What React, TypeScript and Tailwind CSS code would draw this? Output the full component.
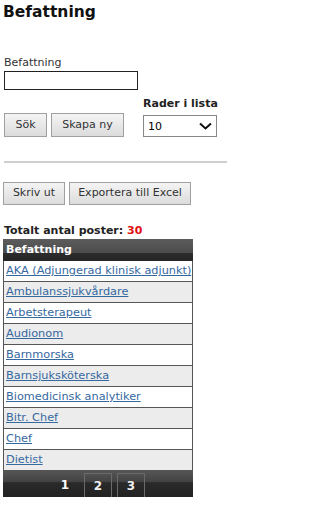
import React from "react";

const rows = [
  "AKA (Adjungerad klinisk adjunkt)",
  "Ambulanssjukvårdare",
  "Arbetsterapeut",
  "Audionom",
  "Barnmorska",
  "Barnsjuksköterska",
  "Biomedicinsk analytiker",
  "Bitr. Chef",
  "Chef",
  "Dietist",
];

const btn =
  "h-full border border-[#a0a0a0] bg-[linear-gradient(to_bottom,#f4f4f4,#dcdcdc)] text-[11px] text-[#333] flex items-center justify-center";

export default function App() {
  return (
    <div
      className="w-[227px] h-[512px] bg-white text-black overflow-hidden"
      style={{ fontFamily: '"DejaVu Sans", Verdana, sans-serif' }}
    >
      <div className="pl-[3px] pt-[3px] h-[22px] flex items-center text-[15.5px] font-bold leading-none text-[#111]">
        Befattning
      </div>
      <div className="pl-[4px] mt-[34px] h-[12px] flex items-center text-[11px] text-[#333] leading-none">
        Befattning
      </div>
      <div className="ml-[4px] mt-[3px] w-[134px] h-[19px] border border-[#222] bg-white" />
      <div className="flex mt-[7px] h-[40px]">
        <div className="flex items-end gap-[4px] pl-[4px]">
          <div className="h-[24px] flex gap-[4px]">
            <button className={btn + " w-[43px]"}>Sök</button>
            <button className={btn + " w-[73px]"}>Skapa ny</button>
          </div>
        </div>
        <div className="ml-[19px] flex flex-col">
          <div className="h-[12px] flex items-center text-[11px] font-bold leading-none text-[#222]">
            Rader i lista
          </div>
          <div className="mt-[6px] w-[74px] h-[22px] border border-[#888] bg-white flex items-center justify-between pl-[4px] pr-[4px]">
            <span className="text-[11px] leading-none text-black">10</span>
            <svg width="13" height="8" viewBox="0 0 13 8">
              <path d="M1 1.5 L6.5 6.5 L12 1.5" fill="none" stroke="#111" strokeWidth="2" />
            </svg>
          </div>
        </div>
      </div>
      <div className="ml-[4px] mt-[24px] h-[2px] bg-[#cfcfcf]" />
      <div className="flex gap-[4px] pl-[3px] mt-[19px] h-[23px]">
        <button className={btn + " w-[62px]"}>Skriv ut</button>
        <button className={btn + " w-[122px]"}>Exportera till Excel</button>
      </div>
      <div className="pl-[4px] mt-[19px] h-[12px] flex items-center text-[11px] font-bold leading-none text-[#222]">
        Totalt antal poster:&nbsp;<span className="text-[#e01010]">30</span>
      </div>
      <div className="ml-[3px] mt-[3px] w-[190px]">
        <div className="h-[22px] flex items-center pl-[3px] text-[11px] font-bold text-white bg-[linear-gradient(to_bottom,#5c5c5c_0%,#4c4c4c_62%,#2c2c2c_64%,#252525_100%)]">
          Befattning
        </div>
        <div className="border-l border-r border-[#555]">
          {rows.map((r, i) => (
            <div
              key={r}
              className={
                "h-[21px] flex items-center pl-[2px] border-b border-[#555] text-[11.3px] " +
                (i % 2 === 1 ? "bg-[#ececec]" : "bg-white")
              }
            >
              <a className="text-[#35689f] underline leading-none whitespace-nowrap">{r}</a>
            </div>
          ))}
        </div>
        <div className="h-[26px] flex items-end justify-center gap-[5px] bg-[linear-gradient(to_bottom,#555_0%,#444_40%,#2a2a2a_45%,#222_100%)]">
          <div className="w-[28px] h-[24px] flex items-center justify-center text-[12px] font-bold text-white">1</div>
          <div className="w-[28px] h-[24px] flex items-center justify-center text-[12px] font-bold text-[#eee] border-t border-l border-r border-[#6a6a6a]">2</div>
          <div className="w-[28px] h-[24px] flex items-center justify-center text-[12px] font-bold text-[#eee] border-t border-l border-r border-[#6a6a6a]">3</div>
        </div>
      </div>
    </div>
  );
}
